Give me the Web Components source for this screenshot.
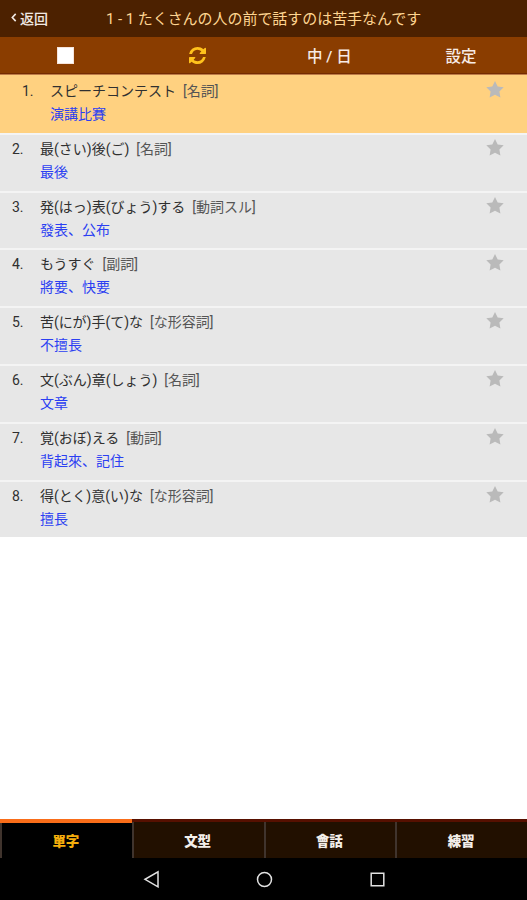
<!DOCTYPE html>
<html lang="ja">
<head>
<meta charset="utf-8">
<title>単語リスト</title>
<style>
  html, body {
    margin: 0;
    padding: 0;
    background: #fff;
  }
</style>
</head>
<body>
<vocab-app></vocab-app>

<script>
"use strict";

const WORDS = [
  ["スピーチコンテスト", "[名詞]", "演講比賽"],
  ["最(さい)後(ご)", "[名詞]", "最後"],
  ["発(はっ)表(びょう)する", "[動詞スル]", "發表、公布"],
  ["もうすぐ", "[副詞]", "將要、快要"],
  ["苦(にが)手(て)な", "[な形容詞]", "不擅長"],
  ["文(ぶん)章(しょう)", "[名詞]", "文章"],
  ["覚(おぼ)える", "[動詞]", "背起來、記住"],
  ["得(とく)意(い)な", "[な形容詞]", "擅長"],
];

class BaseElement extends HTMLElement {
  constructor() {
    super();
    this._root = this.attachShadow({ mode: "open" });
    this._root.innerHTML = `<style>* { box-sizing: border-box; } ${this._style}</style>${this._template}`;
  }
}

class TitleBar extends BaseElement {
  get _style() {
    return /*css*/ `
      :host {
        display: grid;
        grid-template-columns: 105px 1fr 105px;
        align-items: center;
        height: 37px;
        padding-bottom: 2px;
        box-sizing: border-box;
        background: #4c2100;
        white-space: nowrap;
      }
      .back {
        display: flex;
        align-items: center;
        gap: 3px;
        padding-left: 11px;
        color: #f1e9e3;
        font-size: 14px;
        font-weight: 500;
      }
      svg { width: 6px; height: 9px; }
      .title {
        color: #ffd591;
        font-size: 15px;
        text-align: center;
      }
      .title span { letter-spacing: -0.05px; }
    `;
  }
  get _template() {
    return /*html*/ `
      <div class="back">
        <svg viewBox="0 0 6 9"><path d="M4.7 .9 1.3 4.5l3.4 3.6" fill="none" stroke="#f1e9e3" stroke-width="1.6"/></svg>
        <span>返回</span>
      </div>
      <div class="title"><span><slot></slot></span></div>
    `;
  }
}

class ToolBar extends BaseElement {
  get _style() {
    return /*css*/ `
      :host {
        display: grid;
        grid-template-columns: repeat(4, 1fr);
        align-items: center;
        justify-items: center;
        height: 38px;
        padding-bottom: 1px;
        box-sizing: border-box;
        background: #8a3d00;
        border-bottom: 1px solid #bf7c48;
        box-shadow: inset 0 -1px #742c00;
        color: #f7ebe6;
        font-size: 15.5px;
        font-weight: 500;
      }
      .stop {
        width: 17px;
        height: 17px;
        background: #fff;
        border: 1px solid #f6e4dc;
      }
      svg { width: 17px; height: 17px; }
    `;
  }
  get _template() {
    return /*html*/ `
      <div class="stop"></div>
      <svg viewBox="0 0 1536 1536" fill="#ffc21c">
        <path d="M1511 928q0 5-1 7-64 268-268 434.500T764 1536q-146 0-282.500-55T238 1324l-129 129q-19 19-45 19t-45-19-19-45V960q0-26 19-45t45-19h448q26 0 45 19t19 45-19 45l-137 137q71 66 161 102t187 36q134 0 250-65t186-179q11-17 53-117 8-23 30-23h192q13 0 22.500 9.500t9.500 22.500zm25-800v448q0 26-19 45t-45 19h-448q-26 0-45-19t-19-45 19-45l138-138Q969 256 768 256q-134 0-250 65T332 500q-11 17-53 117-8 23-30 23H50q-13 0-22.500-9.500T18 608v-7q65-268 270-434.500T768 0q146 0 284 55.500T1297 212l130-129q19-19 45-19t45 19 19 45z"/>
      </svg>
      <span>中 / 日</span>
      <span>設定</span>
    `;
  }
}

class WordRow extends BaseElement {
  get _style() {
    return /*css*/ `
      :host {
        display: grid;
        grid-template-columns: 28px 1fr 18px;
        box-sizing: border-box;
        height: 57.8px;
        padding: 3px 23px 0 12px;
        background: #e7e7e7;
        border-top: 2px solid #f4f4f4;
        color: #303030;
        font-size: 14px;
        line-height: 23px;
        white-space: nowrap;
      }
      :host([active]) {
        padding-left: 22px;
        background: #ffd180;
        border-top-color: #ffd180;
      }
      .kind { margin-left: 7px; color: #555; }
      .mean { color: #2b3ff2; }
      svg { width: 18px; height: 17px; margin-top: 1px; }
    `;
  }
  get _template() {
    return /*html*/ `
      <div><slot name="no"></slot></div>
      <div>
        <div><slot name="word"></slot><span class="kind"><slot name="kind"></slot></span></div>
        <div class="mean"><slot name="mean"></slot></div>
      </div>
      <svg viewBox="0 0 18 17"><path fill="#bababa" d="M9 0l2.700 5.400 6 .9-4.300 4.200 1 6L9 13.700l-5.400 2.800 1-6L.3 6.300l6-.9z"/></svg>
    `;
  }
}

class WordList extends BaseElement {
  get _style() {
    return `:host { display: block; flex: 1; background: #fff; }`;
  }
  get _template() {
    return WORDS.map(([word, kind, mean], i) => /*html*/ `
      <word-row ${i === 0 ? "active" : ""}>
        <span slot="no">${i + 1}.</span>
        <span slot="word">${word}</span>
        <span slot="kind">${kind}</span>
        <span slot="mean">${mean}</span>
      </word-row>`).join("");
  }
}

class TabItem extends BaseElement {
  get _style() {
    return /*css*/ `
      :host {
        display: flex;
        align-items: center;
        justify-content: center;
        box-sizing: border-box;
        border-top: 3px solid #571000;
        padding-bottom: 1px;
        background: #221000;
        box-shadow: inset 2px 0 #40342d;
        color: #f3eee9;
        font-size: 13.5px;
        font-weight: 900;
      }
      :host([active]) {
        border-top: 4px solid #f96d19;
        padding-bottom: 2px;
        background: #000;
        color: #f5ad0c;
      }
    `;
  }
  get _template() {
    return `<slot></slot>`;
  }
}

class TabBar extends BaseElement {
  get _style() {
    return /*css*/ `
      :host {
        display: grid;
        grid-template-columns: repeat(4, 1fr);
        height: 39px;
        font-family: Roboto, "Noto Sans CJK TC", sans-serif;
      }
    `;
  }
  get _template() {
    return `<slot></slot>`;
  }
}

class NavBar extends BaseElement {
  get _style() {
    return /*css*/ `
      :host {
        display: flex;
        justify-content: center;
        align-items: center;
        gap: 96px;
        height: 42px;
        padding-left: 1px;
        box-sizing: border-box;
        background: #000;
      }
      svg {
        width: 17px;
        height: 18px;
        fill: none;
        stroke: #e2e2e2;
        stroke-width: 1.5;
      }
    `;
  }
  get _template() {
    return /*html*/ `
      <svg viewBox="0 0 17 18"><path d="M15 1.800v15L2 9.300z"/></svg>
      <svg viewBox="0 0 17 18"><circle cx="8.500" cy="9.500" r="7"/></svg>
      <svg viewBox="0 0 17 18"><path d="M2.200 3.200h12.600v12.600H2.200z"/></svg>
    `;
  }
}

class VocabApp extends BaseElement {
  get _style() {
    return /*css*/ `
      :host {
        display: flex;
        flex-direction: column;
        height: 900px;
        overflow: hidden;
        font-family: Roboto, "Noto Sans CJK JP", sans-serif;
      }
    `;
  }
  get _template() {
    return /*html*/ `
      <title-bar>1 - 1 たくさんの人の前で話すのは苦手なんです</title-bar>
      <tool-bar></tool-bar>
      <word-list></word-list>
      <tab-bar>
        <tab-item active>單字</tab-item>
        <tab-item>文型</tab-item>
        <tab-item>會話</tab-item>
        <tab-item>練習</tab-item>
      </tab-bar>
      <nav-bar></nav-bar>
    `;
  }
}

customElements.define("title-bar", TitleBar);
customElements.define("tool-bar", ToolBar);
customElements.define("word-row", WordRow);
customElements.define("word-list", WordList);
customElements.define("tab-item", TabItem);
customElements.define("tab-bar", TabBar);
customElements.define("nav-bar", NavBar);
customElements.define("vocab-app", VocabApp);
</script>
</body>
</html>
